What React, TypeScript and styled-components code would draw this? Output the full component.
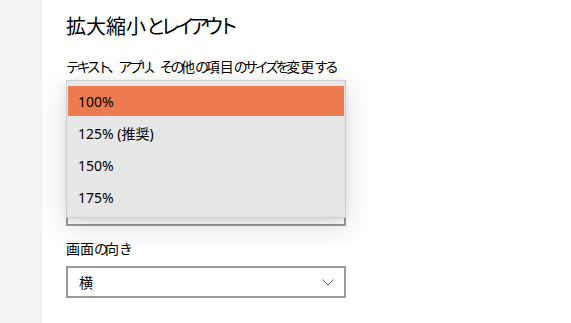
import React from 'react';
import styled, { createGlobalStyle } from 'styled-components';

const GlobalStyle = createGlobalStyle`
  html, body {
    margin: 0;
    padding: 0;
    background: #ffffff;
  }
  body {
    font-family: 'Noto Sans', 'Noto Sans CJK JP', sans-serif;
    color: #000;
  }
`;

const Page = styled.div`
  display: flex;
  width: 571px;
  height: 323px;
  overflow: hidden;
`;

const Sidebar = styled.div`
  width: 42px;
  flex-shrink: 0;
  background: #f2f2f2;
`;

const Main = styled.div`
  flex: 1;
  padding: 12px 0 0 24px;
`;

const Heading = styled.h2`
  margin: 0 0 16px;
  font-family: 'Noto Sans CJK JP', sans-serif;
  font-size: 20px;
  font-weight: 400;
  line-height: 28px;
  white-space: nowrap;
`;

const Field = styled.div`
  position: relative;
  width: 280px;
  margin-bottom: 12px;
`;

const Label = styled.div`
  font-family: 'Noto Sans CJK JP', sans-serif;
  font-size: 14px;
  line-height: 20px;
  margin-bottom: 8px;
  white-space: nowrap;
`;

// kana in the UI font are much narrower than in Noto CJK, so tighten them
const Kana = styled.span<{ $squeeze: number }>`
  letter-spacing: ${(p) => p.$squeeze}px;
`;

function Jp({ text, squeeze }: { text: string; squeeze: number }) {
  const parts = text.split(/([\u4e00-\u9fff]+)/).filter(Boolean);
  return (
    <>
      {parts.map((part, i) =>
        /[\u4e00-\u9fff]/.test(part) ? (
          <span key={i}>{part}</span>
        ) : (
          <Kana key={i} $squeeze={squeeze}>
            {part}
          </Kana>
        )
      )}
    </>
  );
}

/* link + resolution label sit under the open popup */
const Covered = styled.div`
  height: 78px;
`;

const Select = styled.div`
  box-sizing: border-box;
  height: 32px;
  border: 2px solid #999;
  display: flex;
  align-items: center;
  justify-content: space-between;
  padding: 0 10px 0 11px;
  font-size: 14px;
  font-family: 'Noto Sans CJK JP', sans-serif;
`;

const Chevron = () => (
  <svg width="12" height="7" viewBox="0 0 12 7">
    <path d="M0.5 0.5 L6 6 L11.5 0.5" fill="none" stroke="#666" strokeWidth="1" />
  </svg>
);

const Popup = styled.div`
  position: absolute;
  top: -4px;
  left: 0;
  width: 280px;
  box-sizing: border-box;
  background: #e7e7e7;
  border: 1px solid #cbcbcb;
  padding: 5px 1px;
  display: flex;
  flex-direction: column;
  gap: 2px;
  box-shadow: 0 8px 26px rgba(0, 0, 0, 0.14), 0 2px 6px rgba(0, 0, 0, 0.07);
  z-index: 2;
`;

const Option = styled.div<{ $selected?: boolean }>`
  height: 30px;
  display: flex;
  align-items: center;
  padding-left: 10px;
  font-size: 14px;
  background: ${(p) => (p.$selected ? '#ec7c4f' : 'transparent')};
  color: #000;
`;

const scales = ['100%', '125% (推奨)', '150%', '175%'];

export default function App() {
  return (
    <Page>
      <GlobalStyle />
      <Sidebar />
      <Main>
        <Heading>
          <Jp text="拡大縮小とレイアウト" squeeze={-5.5} />
        </Heading>
        <Field>
          <Label>
            <Jp text="テキスト、アプリ、その他の項目のサイズを変更する" squeeze={-3.4} />
          </Label>
          <div style={{ position: 'relative' }}>
            <Select />
            <Popup>
              {scales.map((s, i) => (
                <Option key={s} $selected={i === 0}>
                  {s}
                </Option>
              ))}
            </Popup>
          </div>
          <Covered />
          <Select />
        </Field>
        <Field>
          <Label>
            <Jp text="画面の向き" squeeze={-3} />
          </Label>
          <Select>
            横
            <Chevron />
          </Select>
        </Field>
      </Main>
    </Page>
  );
}
